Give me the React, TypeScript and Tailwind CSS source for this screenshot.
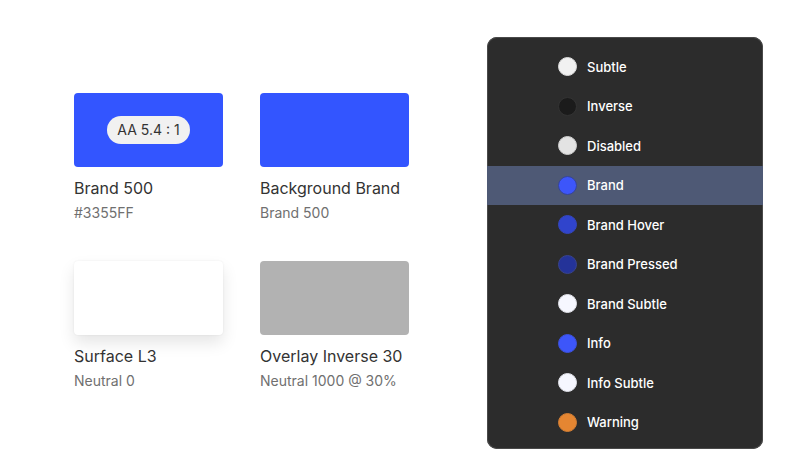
type Swatch = {
  name: string;
  value: string;
  fill: string;
  contrast?: string;
};

type Token = {
  name: string;
  fill: string;
  selected?: boolean;
};

const swatches: Swatch[] = [
  { name: "Brand 500", value: "#3355FF", fill: "bg-[#3355ff]", contrast: "AA 5.4 : 1" },
  { name: "Background Brand", value: "Brand 500", fill: "bg-[#3355ff]" },
  {
    name: "Surface L3",
    value: "Neutral 0",
    fill: "bg-white shadow-[0_0_2px_rgba(0,0,0,0.08),0_8px_16px_rgba(0,0,0,0.10)]",
  },
  { name: "Overlay Inverse 30", value: "Neutral 1000 @ 30%", fill: "bg-[#b2b2b2]" },
];

const tokens: Token[] = [
  { name: "Subtle", fill: "bg-[#f1f1f1] border-[#dcdcdc]" },
  { name: "Inverse", fill: "bg-[#1b1b1b] border-[#333333]" },
  { name: "Disabled", fill: "bg-[#e3e3e3] border-[#d0d0d0]" },
  { name: "Brand", fill: "bg-[#3d56fa] border-[#35449c]", selected: true },
  { name: "Brand Hover", fill: "bg-[#3044cc] border-[#3446bd]" },
  { name: "Brand Pressed", fill: "bg-[#243399] border-[#38438f]" },
  { name: "Brand Subtle", fill: "bg-[#f6f7ff] border-[#e2e3ea]" },
  { name: "Info", fill: "bg-[#3d56fa] border-[#3c51dc]" },
  { name: "Info Subtle", fill: "bg-[#f6f7ff] border-[#e2e3ea]" },
  { name: "Warning", fill: "bg-[#e58632] border-[#d27e34]" },
];

function SwatchCard({ swatch }: { swatch: Swatch }) {
  return (
    <figure>
      <div className={`flex h-[74px] items-center justify-center rounded ${swatch.fill}`}>
        {swatch.contrast && (
          <span className="rounded-full bg-[#f1f1f1] px-[10px] text-sm leading-7 text-[#333333]">
            {swatch.contrast}
          </span>
        )}
      </div>
      <figcaption className="mt-[9px] whitespace-nowrap">
        <h2 className="text-base leading-6 text-[#333333]">{swatch.name}</h2>
        <p className="mt-[3px] text-sm leading-5 text-[#707070]">{swatch.value}</p>
      </figcaption>
    </figure>
  );
}

function TokenRow({ token }: { token: Token }) {
  return (
    <li className="flex flex-1">
      <button
        type="button"
        aria-pressed={Boolean(token.selected)}
        className={`flex w-full items-center gap-[10px] pl-[71px] text-left text-[13px] leading-5 font-medium text-white ${
          token.selected ? "bg-[#4e5975]" : ""
        }`}
      >
        <span className={`size-[19px] shrink-0 rounded-full border ${token.fill}`} />
        {token.name}
      </button>
    </li>
  );
}

export default function App() {
  return (
    <main className="flex min-h-screen gap-[78px] bg-white pt-[37px] pr-[37px] pl-[74px] font-['Inter',sans-serif]">
      <section
        aria-label="Color swatches"
        className="grid shrink-0 grid-cols-[149px_149px] content-start gap-x-[37px] gap-y-[38px] pt-14"
      >
        {swatches.map((swatch) => (
          <SwatchCard key={swatch.name} swatch={swatch} />
        ))}
      </section>
      <ul
        aria-label="Color tokens"
        className="flex flex-1 flex-col rounded-[10px] bg-[#2c2c2c] pt-[10px] pb-[7px] inset-shadow-[0_0_0_1px_#4a4a4a]"
      >
        {tokens.map((token) => (
          <TokenRow key={token.name} token={token} />
        ))}
      </ul>
    </main>
  );
}
